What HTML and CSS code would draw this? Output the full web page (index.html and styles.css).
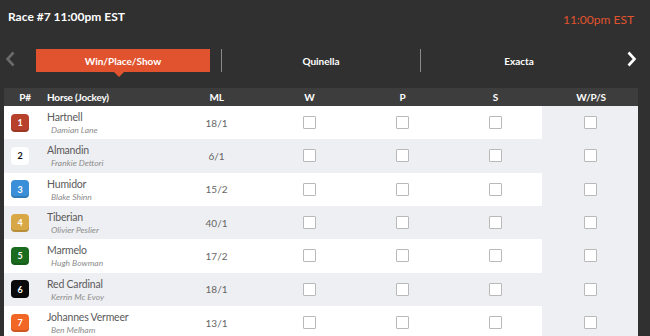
FILE: index.html
```html
<!DOCTYPE html>
<html lang="en">
<head>
    <meta charset="utf-8">
    <meta name="viewport" content="width=device-width, initial-scale=1">
    <title>Race #7 Betting</title>
    <link rel="stylesheet" href="styles.css">
</head>
<body>
    <div class="race-bar">
        <h1 class="race-title">Race #7 11:00pm EST</h1>
        <span class="post-time">11:00pm EST</span>
    </div>

    <nav class="bet-nav">
        <span class="nav-arrow prev">
            <svg width="10" height="16" viewBox="0 0 10 16"><path d="M8.5 1.5 L2.5 8 L8.5 14.5" fill="none" stroke="currentColor" stroke-width="2.6"/></svg>
        </span>
        <div class="bet-tabs">
            <div class="bet-tab active"><span>Win/Place/Show</span></div>
            <div class="bet-tab"><span>Quinella</span></div>
            <div class="bet-tab"><span>Exacta</span></div>
        </div>
        <span class="nav-arrow next">
            <svg width="10" height="16" viewBox="0 0 10 16"><path d="M1.5 1.5 L7.5 8 L1.5 14.5" fill="none" stroke="currentColor" stroke-width="2.6"/></svg>
        </span>
    </nav>

    <div class="runners">
        <div class="runner-head">
            <div class="col-num">P#</div>
            <div class="col-horse">Horse (Jockey)</div>
            <div class="col-c">ML</div>
            <div class="col-c">W</div>
            <div class="col-c">P</div>
            <div class="col-c">S</div>
            <div class="col-c">W/P/S</div>
        </div>

        <div class="runner">
            <div class="col-num"><span class="pp pp-1">1</span></div>
            <div class="col-horse"><div class="horse">Hartnell</div><div class="jockey">Damian Lane</div></div>
            <div class="col-c odds">18/1</div>
            <div class="col-c"><span class="box"></span></div>
            <div class="col-c"><span class="box"></span></div>
            <div class="col-c"><span class="box"></span></div>
            <div class="col-c wps"><span class="box"></span></div>
        </div>
        <div class="runner">
            <div class="col-num"><span class="pp pp-2">2</span></div>
            <div class="col-horse"><div class="horse">Almandin</div><div class="jockey">Frankie Dettori</div></div>
            <div class="col-c odds">6/1</div>
            <div class="col-c"><span class="box"></span></div>
            <div class="col-c"><span class="box"></span></div>
            <div class="col-c"><span class="box"></span></div>
            <div class="col-c wps"><span class="box"></span></div>
        </div>
        <div class="runner">
            <div class="col-num"><span class="pp pp-3">3</span></div>
            <div class="col-horse"><div class="horse">Humidor</div><div class="jockey">Blake Shinn</div></div>
            <div class="col-c odds">15/2</div>
            <div class="col-c"><span class="box"></span></div>
            <div class="col-c"><span class="box"></span></div>
            <div class="col-c"><span class="box"></span></div>
            <div class="col-c wps"><span class="box"></span></div>
        </div>
        <div class="runner">
            <div class="col-num"><span class="pp pp-4">4</span></div>
            <div class="col-horse"><div class="horse">Tiberian</div><div class="jockey">Olivier Peslier</div></div>
            <div class="col-c odds">40/1</div>
            <div class="col-c"><span class="box"></span></div>
            <div class="col-c"><span class="box"></span></div>
            <div class="col-c"><span class="box"></span></div>
            <div class="col-c wps"><span class="box"></span></div>
        </div>
        <div class="runner">
            <div class="col-num"><span class="pp pp-5">5</span></div>
            <div class="col-horse"><div class="horse">Marmelo</div><div class="jockey">Hugh Bowman</div></div>
            <div class="col-c odds">17/2</div>
            <div class="col-c"><span class="box"></span></div>
            <div class="col-c"><span class="box"></span></div>
            <div class="col-c"><span class="box"></span></div>
            <div class="col-c wps"><span class="box"></span></div>
        </div>
        <div class="runner">
            <div class="col-num"><span class="pp pp-6">6</span></div>
            <div class="col-horse"><div class="horse">Red Cardinal</div><div class="jockey">Kerrin Mc Evoy</div></div>
            <div class="col-c odds">18/1</div>
            <div class="col-c"><span class="box"></span></div>
            <div class="col-c"><span class="box"></span></div>
            <div class="col-c"><span class="box"></span></div>
            <div class="col-c wps"><span class="box"></span></div>
        </div>
        <div class="runner">
            <div class="col-num"><span class="pp pp-7">7</span></div>
            <div class="col-horse"><div class="horse">Johannes Vermeer</div><div class="jockey">Ben Melham</div></div>
            <div class="col-c odds">13/1</div>
            <div class="col-c"><span class="box"></span></div>
            <div class="col-c"><span class="box"></span></div>
            <div class="col-c"><span class="box"></span></div>
            <div class="col-c wps"><span class="box"></span></div>
        </div>
    </div>
</body>
</html>
```

FILE: styles.css
```css
* {
    margin: 0;
    padding: 0;
    box-sizing: border-box;
}
body {
    font-family: Lato, "Open Sans", sans-serif;
    background-color: #303030;
    color: white;
    overflow: hidden;
}
.race-bar {
    display: flex;
    justify-content: space-between;
    align-items: flex-start;
    height: 49px;
    padding: 10px 16px 0 8px;
}
.race-title {
    font-size: 12px;
    font-weight: 700;
    line-height: 14px;
}
.post-time {
    font-size: 12px;
    line-height: 14px;
    margin-top: 3px;
    color: #e0532e;
}
.bet-nav {
    display: flex;
    align-items: flex-start;
    height: 39px;
}
.nav-arrow {
    display: flex;
    width: 25px;
    padding-top: 2px;
    justify-content: center;
}
.nav-arrow.prev {
    color: #6a6a6a;
    padding-right: 5px;
}
.nav-arrow.next {
    color: #ffffff;
    width: 33px;
    padding-left: 10px;
    justify-content: flex-start;
}
.bet-tabs {
    display: grid;
    grid-template-columns: 196px 199px 197px;
    width: 592px;
}
.bet-tab {
    display: flex;
    height: 23px;
    align-items: center;
    justify-content: center;
    font-size: 10px;
    font-weight: 700;
}
.bet-tab + .bet-tab {
    border-left: 1px solid #8a8a8a;
}
.bet-tab.active span {
    position: relative;
    display: flex;
    align-items: center;
    justify-content: center;
    width: 174px;
    height: 23px;
    margin-left: 11px;
    margin-right: 11px;
    background: #e0532e;
}
.bet-tab.active span::after {
    content: "";
    position: absolute;
    left: 78px;
    bottom: -5px;
    border-left: 5px solid transparent;
    border-right: 5px solid transparent;
    border-top: 5px solid #e0532e;
}
.runners {
    margin: 0 12px 0 4px;
}
.runner-head,
.runner {
    display: grid;
    grid-template-columns: 38px 128px 93px 93px 93px 93px 1fr;
}
.runner-head {
    height: 18px;
    background: #3d3d3d;
    font-size: 10px;
    font-weight: 700;
    letter-spacing: -0.2px;
    align-items: center;
}
.runner {
    height: 33.33px;
    background: #ffffff;
    color: #555;
}
.runner:nth-child(odd) {
    background: #eeeff2;
}
.runner > div {
    display: flex;
    align-items: center;
    height: 100%;
}
.col-num {
    display: flex;
    justify-content: center;
    padding-left: 4px;
}
.runner .col-num {
    padding-left: 7px;
    justify-content: flex-start;
}
.col-horse {
    padding-left: 5px;
}
.runner .col-horse {
    flex-direction: column;
    align-items: flex-start !important;
    justify-content: center;
    padding-top: 2px;
}
.col-c {
    text-align: center;
    justify-content: center;
}
.runner-head .col-c:last-child {
    padding-left: 2px;
}
.wps {
    background: #eeeff2;
}
.horse {
    font-size: 10.5px;
    line-height: 13px;
    letter-spacing: -0.2px;
    color: #5a5a5a;
}
.jockey {
    font-size: 8.5px;
    line-height: 11px;
    margin-top: 1px;
    font-style: italic;
    color: #8c8c8c;
    padding-left: 4px;
}
.odds {
    font-size: 10px;
    color: #666;
}
.pp {
    display: flex;
    width: 18px;
    height: 18px;
    border-radius: 4px;
    align-items: center;
    justify-content: center;
    font-size: 9px;
    font-weight: 700;
    color: white;
    box-shadow: inset 0 -2px 0 rgba(0,0,0,0.15);
}
.pp-1 { background: #b8412c; }
.pp-2 { background: #ffffff; color: #111; box-shadow: none; }
.pp-3 { background: #3b8fd8; }
.pp-4 { background: #d8a846; }
.pp-5 { background: #1b6b1f; }
.pp-6 { background: #0a0a0a; }
.pp-7 { background: #f26726; }
.box {
    display: block;
    width: 13px;
    height: 13px;
    background: #ffffff;
    border: 1px solid #b9b9b9;
    border-radius: 1px;
}
```
